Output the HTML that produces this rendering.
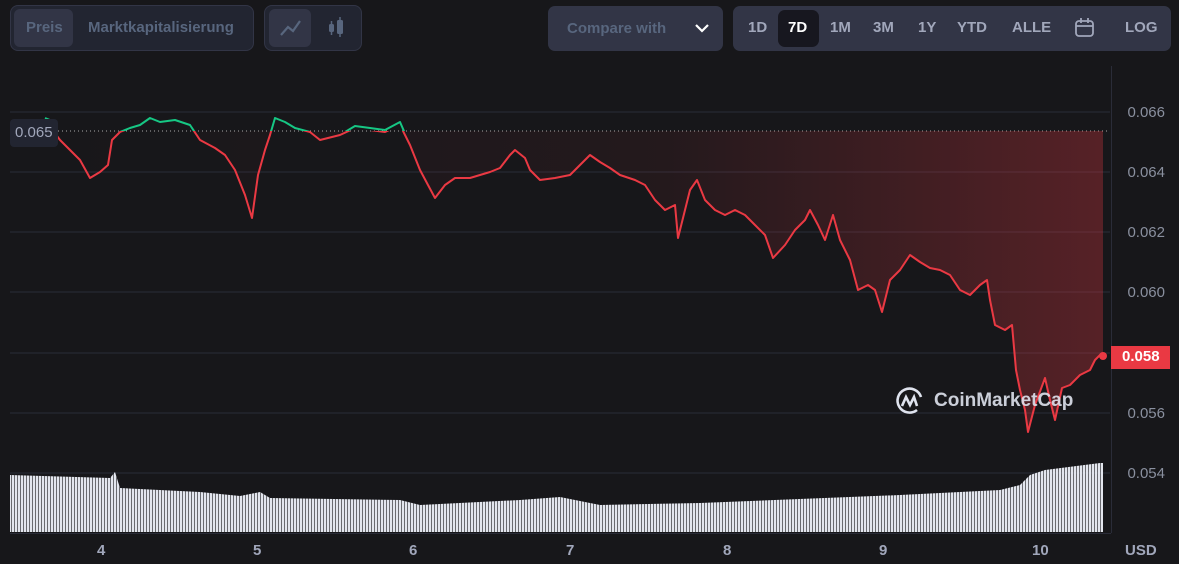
<!DOCTYPE html><html><head><style>
body{margin:0;width:1179px;height:564px;background:#17171a;font-family:"Liberation Sans",sans-serif;overflow:hidden;position:relative}
.g{position:absolute;background:#222531;border:1px solid #323546;border-radius:8px;box-sizing:border-box}
.t{position:absolute;font-weight:bold;font-size:15px;color:#58667e}
.b{position:absolute;font-weight:bold;font-size:15px;color:#a1a7bb;top:19px}
.yl{position:absolute;right:14px;font-size:15px;color:#8a909f}
.xl{position:absolute;top:542px;font-size:15px;color:#a1a7bb;font-weight:bold}
</style></head><body>
<div class="g" style="left:10px;top:5px;width:244px;height:46px"></div>
<div style="position:absolute;left:14px;top:9px;width:59px;height:38px;background:#323546;border-radius:6px"></div>
<div class="t" style="left:26px;top:19px">Preis</div>
<div class="t" style="left:88px;top:19px">Marktkapitalisierung</div>
<div class="g" style="left:264px;top:5px;width:98px;height:46px"></div>
<div style="position:absolute;left:269px;top:9px;width:42px;height:38px;background:#323546;border-radius:6px"></div>
<svg style="position:absolute;left:280px;top:18px" width="22" height="20"><path d="M1 17L8 9L13 13L20 3" stroke="#58667e" stroke-width="2.2" fill="none"/></svg>
<svg style="position:absolute;left:327px;top:17px" width="20" height="22"><rect x="2" y="7" width="5" height="8" rx="1.5" fill="#58667e"/><line x1="4.5" y1="4" x2="4.5" y2="18" stroke="#58667e" stroke-width="1.5"/><rect x="10" y="3" width="6" height="14" rx="1.5" fill="#58667e"/><line x1="13" y1="0" x2="13" y2="20" stroke="#58667e" stroke-width="1.5"/></svg>
<div style="position:absolute;left:548px;top:6px;width:175px;height:45px;background:#323546;border-radius:7px"></div>
<div style="position:absolute;left:567px;top:20px;font-size:15px;color:#58667e;font-weight:bold">Compare with</div>
<svg style="position:absolute;left:694px;top:21px" width="16" height="14"><path d="M2 4L8 10L14 4" stroke="#fff" stroke-width="2.2" fill="none"/></svg>
<div style="position:absolute;left:733px;top:6px;width:438px;height:45px;background:#323546;border-radius:7px"></div>
<div style="position:absolute;left:778px;top:10px;width:41px;height:37px;background:#17171f;border-radius:7px"></div>
<div class="b" style="left:748px">1D</div><div class="b" style="left:788px;color:#fff">7D</div><div class="b" style="left:830px">1M</div><div class="b" style="left:873px">3M</div><div class="b" style="left:918px">1Y</div><div class="b" style="left:957px">YTD</div><div class="b" style="left:1012px">ALLE</div><div class="b" style="left:1125px">LOG</div>
<svg style="position:absolute;left:1074px;top:17px" width="22" height="22"><rect x="2" y="4" width="17" height="15" rx="3" stroke="#a1a7bb" stroke-width="1.8" fill="none"/><line x1="2" y1="9" x2="19" y2="9" stroke="#a1a7bb" stroke-width="1.8"/><line x1="7" y1="1" x2="7" y2="6" stroke="#a1a7bb" stroke-width="1.8"/><line x1="14" y1="1" x2="14" y2="6" stroke="#a1a7bb" stroke-width="1.8"/></svg>
<svg style="position:absolute;left:0;top:0" width="1179" height="564">
<defs>
<pattern id="st" width="3" height="10" patternUnits="userSpaceOnUse"><rect width="2.4" height="10" fill="#e3e6ee"/></pattern>
<linearGradient id="fg" x1="0" x2="1" y1="0" y2="0"><stop offset="0" stop-color="#ea3943" stop-opacity="0"/><stop offset="0.6" stop-color="#ea3943" stop-opacity="0.06"/><stop offset="1" stop-color="#ea3943" stop-opacity="0.3"/></linearGradient>
<clipPath id="ab"><rect x="0" y="0" width="1179" height="131"/></clipPath>
<clipPath id="be"><rect x="0" y="131" width="1179" height="400"/></clipPath>
</defs>
<g stroke="#2a2c38" stroke-width="1"><line x1="10" y1="112" x2="1110" y2="112"/><line x1="10" y1="172" x2="1110" y2="172"/><line x1="10" y1="232" x2="1110" y2="232"/><line x1="10" y1="292" x2="1110" y2="292"/><line x1="10" y1="353" x2="1110" y2="353"/><line x1="10" y1="413" x2="1110" y2="413"/><line x1="10" y1="473" x2="1110" y2="473"/><line x1="1111.5" y1="66" x2="1111.5" y2="533"/><line x1="10" y1="533.5" x2="1111" y2="533.5"/></g>
<polygon fill="url(#st)" points="10,475 110,478 115,472 120,488 200,492 240,496 260,492 270,498 400,500 420,505 520,500 560,497 600,505 700,503 900,495 1000,490 1020,485 1030,475 1045,470 1100,463 1103,463 1103,532 10,532"/>
<line x1="10" y1="131" x2="1110" y2="131" stroke="#aaa" stroke-dasharray="1 3"/>
<polygon fill="url(#fg)" clip-path="url(#be)" points="10,131 10,128 45,120 60,140 70,150 80,160 90,178 100,172 108,165 112,140 120,132 130,128 140,125 150,120 160,122 175,120 190,125 200,140 215,148 225,155 235,170 245,195 252,218 258,175 265,150 270,135 275,118 285,122 295,128 310,132 320,140 340,135 355,128 370,130 385,132 400,125 410,145 420,170 428,185 435,198 445,185 455,178 470,178 490,172 500,168 510,155 515,150 525,158 530,170 540,180 555,178 570,175 580,165 590,155 600,162 610,168 620,175 635,180 645,185 655,200 665,210 675,205 678,238 685,210 690,190 697,180 705,200 715,210 725,215 735,210 745,215 755,225 765,235 773,258 785,245 795,230 805,220 810,210 818,225 825,240 833,215 840,240 850,260 858,290 868,285 875,290 882,312 890,280 900,270 910,255 920,262 930,268 940,270 950,275 960,290 970,295 980,285 987,280 990,300 995,325 1005,330 1012,325 1016,370 1020,390 1025,410 1028,432 1035,405 1045,378 1050,400 1055,420 1062,388 1070,385 1080,375 1090,370 1095,360 1100,355 1103,356 1103,131"/>
<g fill="none" stroke-width="2" stroke-linejoin="round">
<polyline clip-path="url(#be)" stroke="#ea3943" points="10,128 45,120 60,140 70,150 80,160 90,178 100,172 108,165 112,140 120,132 130,128 140,125 150,120 160,122 175,120 190,125 200,140 215,148 225,155 235,170 245,195 252,218 258,175 265,150 270,135 275,118 285,122 295,128 310,132 320,140 340,135 355,128 370,130 385,132 400,125 410,145 420,170 428,185 435,198 445,185 455,178 470,178 490,172 500,168 510,155 515,150 525,158 530,170 540,180 555,178 570,175 580,165 590,155 600,162 610,168 620,175 635,180 645,185 655,200 665,210 675,205 678,238 685,210 690,190 697,180 705,200 715,210 725,215 735,210 745,215 755,225 765,235 773,258 785,245 795,230 805,220 810,210 818,225 825,240 833,215 840,240 850,260 858,290 868,285 875,290 882,312 890,280 900,270 910,255 920,262 930,268 940,270 950,275 960,290 970,295 980,285 987,280 990,300 995,325 1005,330 1012,325 1016,370 1020,390 1025,410 1028,432 1035,405 1045,378 1050,400 1055,420 1062,388 1070,385 1080,375 1090,370 1095,360 1100,355 1103,356"/>
<polyline clip-path="url(#ab)" stroke="#16c784" points="45,118 50,120 60,140 110,140 120,132 130,128 140,125 150,118 160,122 175,120 190,125 200,140 265,150 270,135 275,118 285,122 295,128 310,132 340,135 355,126 370,128 385,130 400,122 410,145"/>
</g>
<circle cx="1103" cy="356" r="4" fill="#ea3943"/>
</svg>
<div style="position:absolute;left:10px;top:119px;width:48px;height:28px;background:#222531;border-radius:4px"></div>
<div style="position:absolute;left:15px;top:124px;font-size:15px;color:#a1a7bb">0.065</div>
<div class="yl" style="top:104px">0.066</div><div class="yl" style="top:164px">0.064</div><div class="yl" style="top:224px">0.062</div><div class="yl" style="top:284px">0.060</div><div class="yl" style="top:405px">0.056</div><div class="yl" style="top:465px">0.054</div>
<div style="position:absolute;left:1111px;top:346px;width:59px;height:23px;background:#ea3943"></div>
<div style="position:absolute;left:1122px;top:348px;font-size:15px;color:#fff;font-weight:bold">0.058</div>
<div class="xl" style="left:97px">4</div><div class="xl" style="left:253px">5</div><div class="xl" style="left:409px">6</div><div class="xl" style="left:566px">7</div><div class="xl" style="left:723px">8</div><div class="xl" style="left:879px">9</div><div class="xl" style="left:1032px">10</div><div class="xl" style="left:1125px">USD</div>
<svg style="position:absolute;left:895px;top:386px" width="30" height="30"><path d="M22 24A12 12 0 1 1 26 11" stroke="#dfe3ee" stroke-width="2.6" fill="none"/><path d="M7 20L11 11L15 19L19 11L22 20" stroke="#dfe3ee" stroke-width="2.6" fill="none"/></svg>
<div style="position:absolute;left:934px;top:390px;font-size:19px;font-weight:bold;color:#dfe3ee;opacity:.9">CoinMarketCap</div>
</body></html>
